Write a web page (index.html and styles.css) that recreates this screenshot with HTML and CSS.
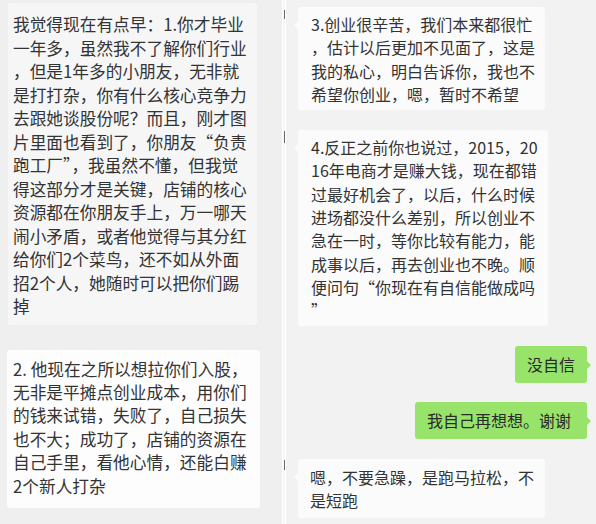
FILE: index.html
```html
<!DOCTYPE html>
<html lang="zh-CN">
<head>
<meta charset="utf-8">
<title>聊天记录</title>
<link rel="stylesheet" href="styles.css">
</head>
<body>
<div class="page">
  <div class="col left">
    <div class="bubble b1">
      <span class="line">我觉得现在有点早：1.你才毕业</span>
      <span class="line">一年多，虽然我不了解你们行业</span>
      <span class="line">，但是1年多的小朋友，无非就</span>
      <span class="line">是打打杂，你有什么核心竞争力</span>
      <span class="line">去跟她谈股份呢？而且，刚才图</span>
      <span class="line">片里面也看到了，你朋友<span class="q">“</span>负责</span>
      <span class="line">跑工厂<span class="q">”</span>，我虽然不懂，但我觉</span>
      <span class="line">得这部分才是关键，店铺的核心</span>
      <span class="line">资源都在你朋友手上，万一哪天</span>
      <span class="line">闹小矛盾，或者他觉得与其分红</span>
      <span class="line">给你们2个菜鸟，还不如从外面</span>
      <span class="line">招2个人，她随时可以把你们踢</span>
      <span class="line">掉</span>
    </div>
    <div class="bubble b2">
      <span class="line">2. 他现在之所以想拉你们入股，</span>
      <span class="line">无非是平摊点创业成本，用你们</span>
      <span class="line">的钱来试错，失败了，自己损失</span>
      <span class="line">也不大；成功了，店铺的资源在</span>
      <span class="line">自己手里，看他心情，还能白赚</span>
      <span class="line">2个新人打杂</span>
    </div>
  </div>
  <div class="divider">
    <span class="tick t1"></span>
    <span class="tick t2"></span>
    <span class="tick t3"></span>
  </div>
  <div class="col right">
    <div class="bubble other b3">
      <span class="line">3.创业很辛苦，我们本来都很忙</span>
      <span class="line">，估计以后更加不见面了，这是</span>
      <span class="line">我的私心，明白告诉你，我也不</span>
      <span class="line">希望你创业，嗯，暂时不希望</span>
    </div>
    <div class="bubble other b4">
      <span class="line">4.反正之前你也说过，2015，20</span>
      <span class="line">16年电商才是赚大钱，现在都错</span>
      <span class="line">过最好机会了，以后，什么时候</span>
      <span class="line">进场都没什么差别，所以创业不</span>
      <span class="line">急在一时，等你比较有能力，能</span>
      <span class="line">成事以后，再去创业也不晚。顺</span>
      <span class="line">便问句<span class="q">“</span>你现在有自信能做成吗</span>
      <span class="line"><span class="q">”</span></span>
    </div>
    <div class="bubble mine g1">
      <span class="line">没自信</span>
    </div>
    <div class="bubble mine g2">
      <span class="line">我自己再想想。谢谢</span>
    </div>
    <div class="bubble other b5">
      <span class="line">嗯，不要急躁，是跑马拉松，不</span>
      <span class="line">是短跑</span>
    </div>
  </div>
</div>
</body>
</html>
```

FILE: styles.css
```css
html, body {
  margin: 0;
  padding: 0;
}

body {
  width: 596px;
  height: 524px;
  overflow: hidden;
  background: #f1f1f1;
  font-family: "Noto Sans CJK SC", "Microsoft YaHei", sans-serif;
  color: #333333;
}

.page {
  display: flex;
  height: 524px;
}

.col {
  display: flex;
  flex-direction: column;
  align-items: flex-start;
  box-sizing: border-box;
}

.left {
  width: 282px;
  padding: 3px 0 0 8px;
  gap: 25px;
  background: #efefef;
}

.divider {
  width: 4px;
  box-sizing: border-box;
  background: #f6f6f6;
  border-left: 1px solid #ffffff;
  border-right: 1px solid #ffffff;
  display: flex;
  flex-direction: column;
  align-items: flex-end;
}

.tick {
  display: block;
  width: 1px;
  background: #6a6a6a;
}

.t1 { margin-top: 10px; height: 9px; }
.t2 { margin-top: 112px; height: 12px; }
.t3 { margin-top: 317px; height: 10px; }

.right {
  flex: 1;
  padding: 7px 9px 0 12px;
  gap: 20px;
  background: #f2f2f2;
}

.bubble {
  position: relative;
  box-sizing: border-box;
  white-space: nowrap;
  border-radius: 3px;
}

.line {
  display: block;
}

.q {
  font-feature-settings: "fwid" 1;
}

.b1 {
  width: 249px;
  padding: 10px 0 6px 5px;
  font-size: 16.7px;
  line-height: 23.5px;
  background: #f6f6f7;
}

.b2 {
  width: 253px;
  margin-left: -1px;
  padding: 8px 0 10px 6px;
  font-size: 16.7px;
  line-height: 23.4px;
  background: #fdfdfd;
}

.other {
  font-size: 16px;
  line-height: 23.3px;
  background: #fbfbfb;
  padding: 6px 0 3px 13px;
}

.other::before {
  content: "";
  position: absolute;
  left: -4px;
  top: 14px;
  border-top: 4px solid transparent;
  border-bottom: 4px solid transparent;
  border-right: 4px solid #fbfbfb;
}

.b3 { width: 247px; padding-bottom: 4px; }
.b4 { width: 250px; }
.b5 { width: 247px; padding: 7px 0 5px 12px; }

.mine {
  align-self: flex-end;
  font-size: 16px;
  line-height: 23.3px;
  background: #98e46b;
  color: #2a2a2a;
  padding: 7px 12px;
}

.mine::after {
  content: "";
  position: absolute;
  right: -4px;
  top: 15px;
  border-top: 4px solid transparent;
  border-bottom: 4px solid transparent;
  border-left: 4px solid #98e46b;
}

.g1 { width: 72px; }
.g2 { width: 172px; margin-top: -1px; padding-right: 16px; }
```
